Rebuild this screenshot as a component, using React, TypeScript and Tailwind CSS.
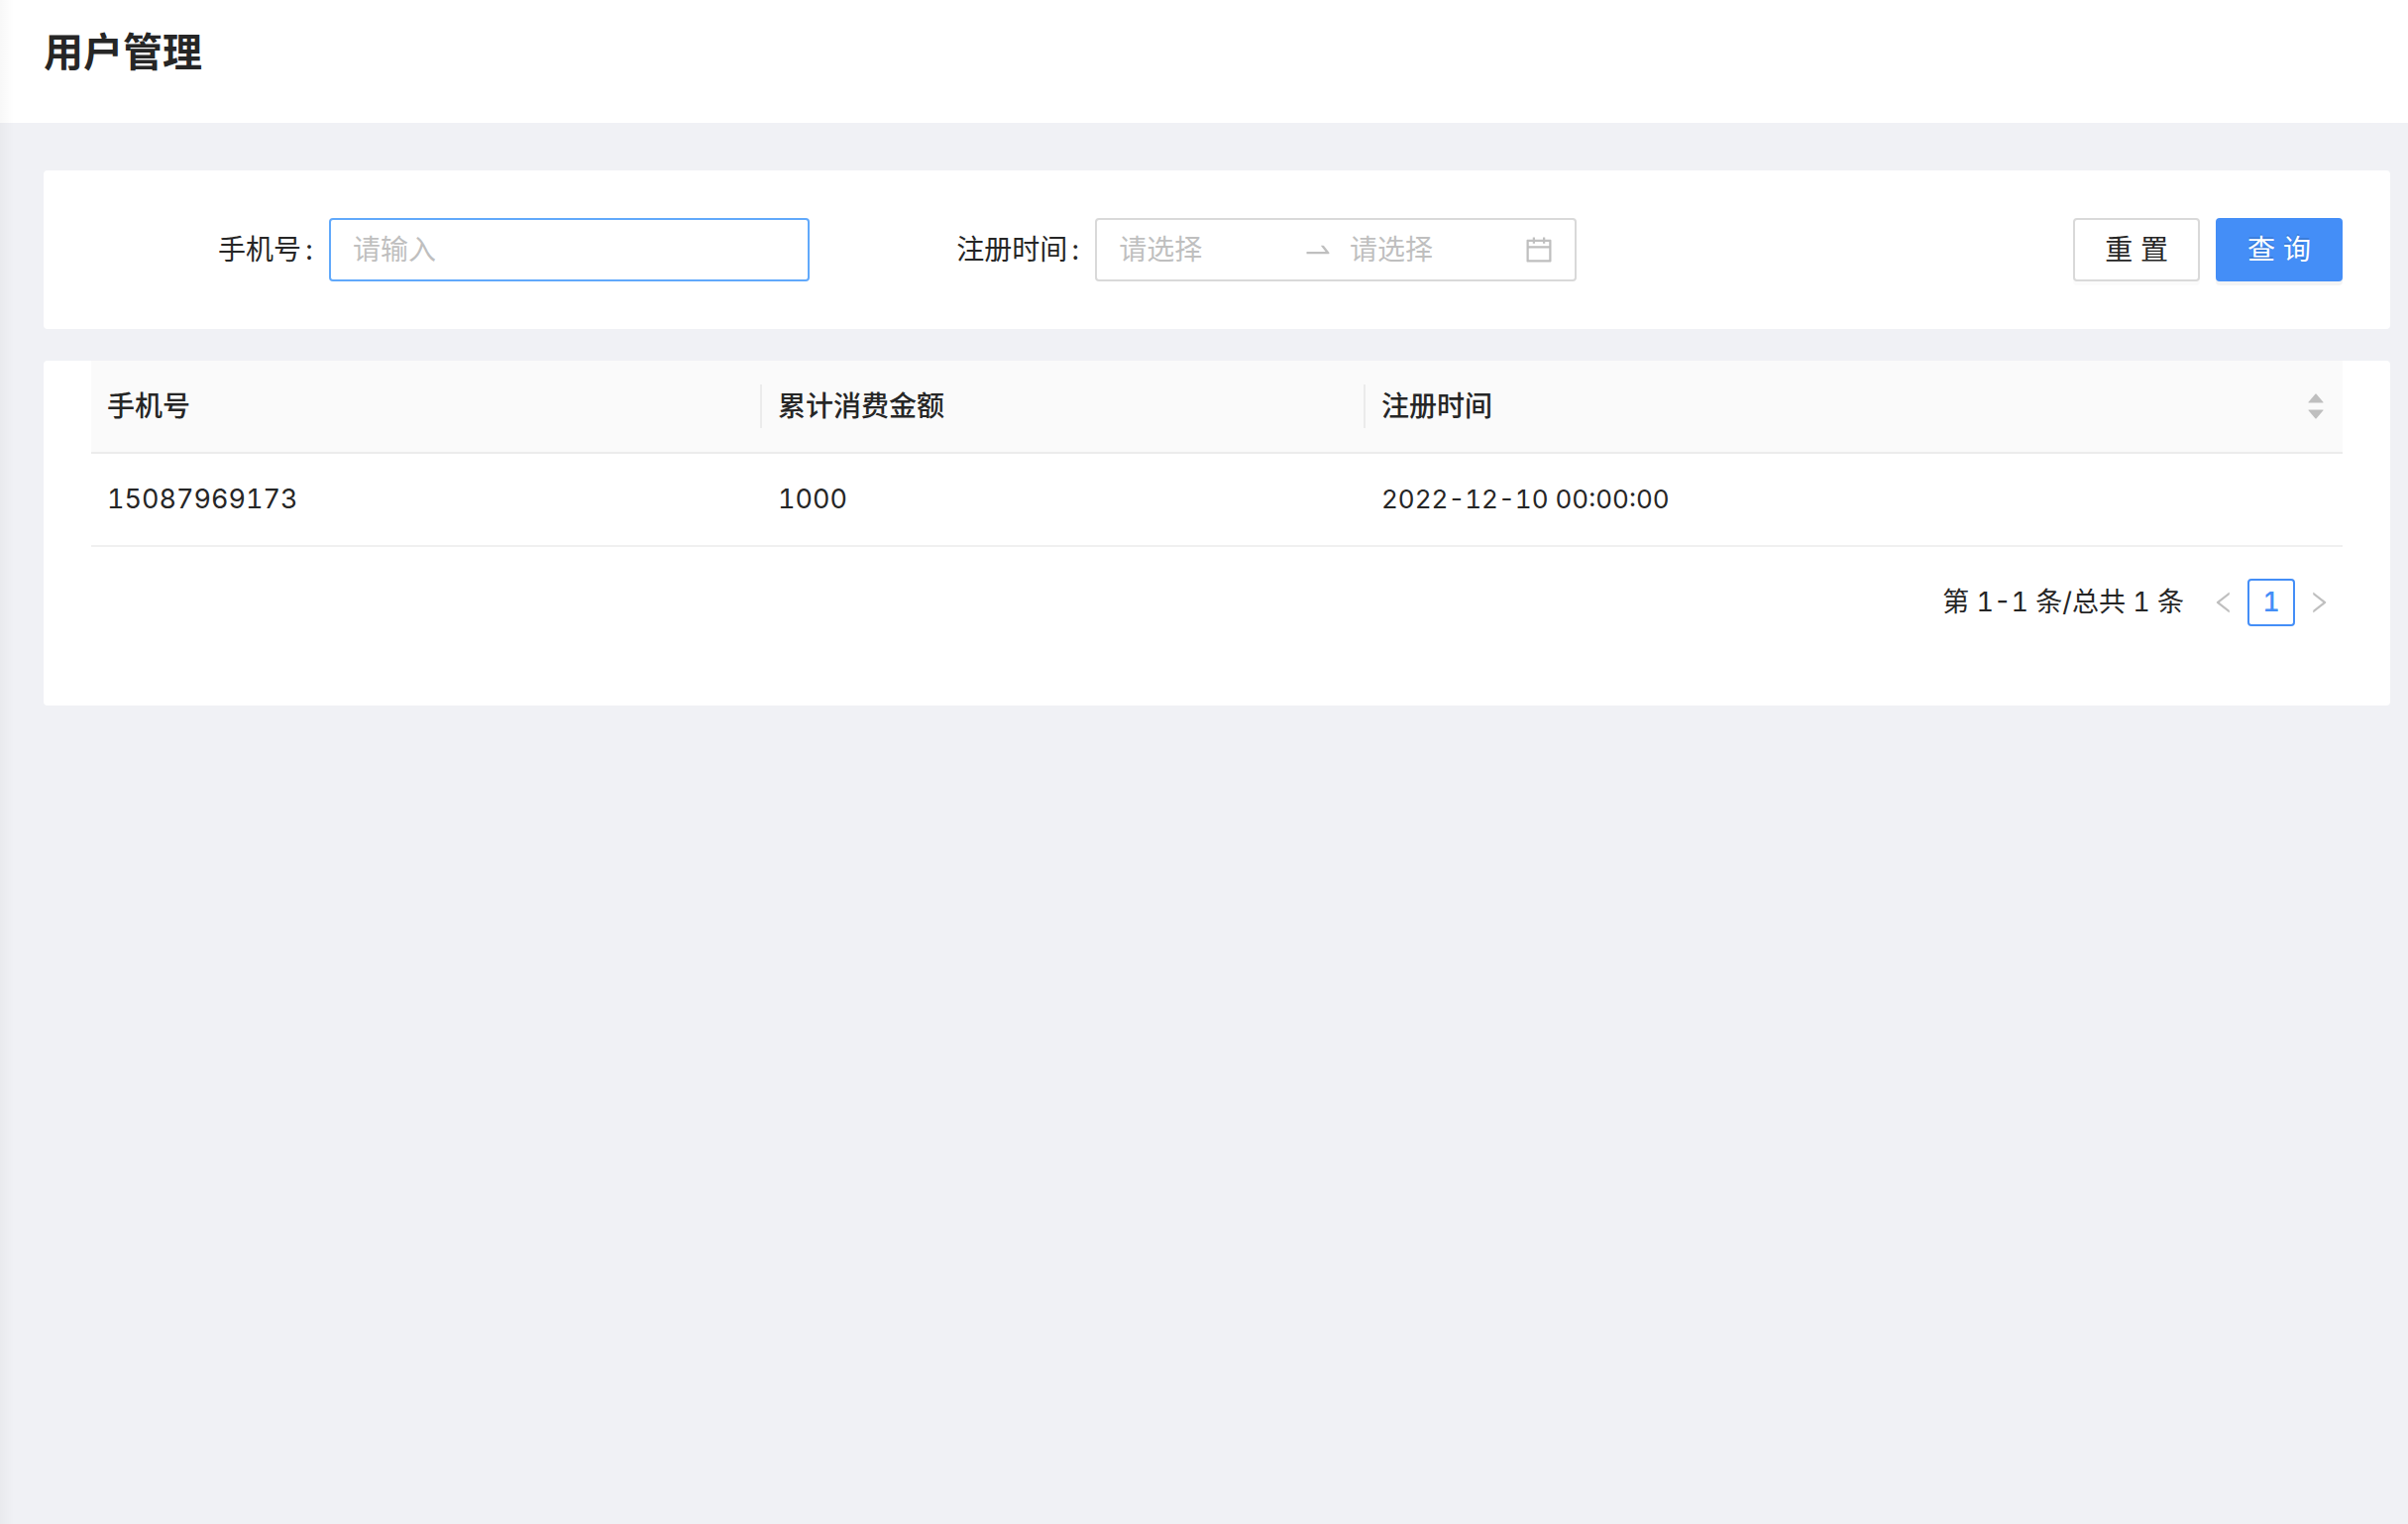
import React, { useState } from 'react';
import {
    AiFillCaretDown,
    AiFillCaretUp,
    AiOutlineCalendar,
    AiOutlineLeft,
    AiOutlineRight,
    AiOutlineSwapRight,
} from 'react-icons/ai';

interface User {
    phone: string;
    amount: number;
    registeredAt: string;
}

const USERS: User[] = [{ phone: '15087969173', amount: 1000, registeredAt: '2022-12-10 00:00:00' }];

interface FieldProps {
    label: string;
    htmlFor: string;
    children: React.ReactNode;
}

const Field: React.FC<FieldProps> = ({ label, htmlFor, children }) => (
    <div className="flex items-center">
        <label htmlFor={htmlFor} className="flex w-60 shrink-0 justify-end gap-1 pr-4 whitespace-nowrap">
            {label}
            <span>:</span>
        </label>
        <div className="min-w-0 flex-1">{children}</div>
    </div>
);

const SearchForm: React.FC = () => {
    const [phone, setPhone] = useState('');
    const [start, setStart] = useState('');
    const [end, setEnd] = useState('');

    const handleReset = () => {
        setPhone('');
        setStart('');
        setEnd('');
    };

    return (
        <form
            className="grid grid-cols-3 gap-12 rounded-sm bg-white p-12"
            onSubmit={(e) => e.preventDefault()}
            onReset={handleReset}
        >
            <Field label="手机号" htmlFor="phone">
                <input
                    id="phone"
                    type="text"
                    value={phone}
                    onChange={(e) => setPhone(e.target.value)}
                    placeholder="请输入"
                    className="h-16 w-full rounded-sm border-2 border-[#61a9fb] bg-white px-[22px] outline-none placeholder:text-[#bfbfbf]"
                />
            </Field>
            <Field label="注册时间" htmlFor="start">
                <div className="flex h-16 items-center rounded-sm border-2 border-[#d9d9d9] pr-5 pl-[22px] text-[#bfbfbf]">
                    <input
                        id="start"
                        type="text"
                        value={start}
                        onChange={(e) => setStart(e.target.value)}
                        placeholder="请选择"
                        className="w-0 flex-1 text-[#262626] outline-none placeholder:text-[#bfbfbf]"
                    />
                    <AiOutlineSwapRight size={32} className="mx-4 shrink-0" />
                    <input
                        type="text"
                        aria-label="结束时间"
                        value={end}
                        onChange={(e) => setEnd(e.target.value)}
                        placeholder="请选择"
                        className="w-0 flex-1 text-[#262626] outline-none placeholder:text-[#bfbfbf]"
                    />
                    <AiOutlineCalendar size={32} className="ml-1.5 shrink-0" />
                </div>
            </Field>
            <div className="flex justify-end gap-4">
                <button
                    type="reset"
                    className="h-16 rounded-sm border-2 border-[#d9d9d9] bg-white px-[30px] whitespace-nowrap shadow-[0_4px_0_rgba(0,0,0,0.016)]"
                >
                    重 置
                </button>
                <button
                    type="submit"
                    className="h-16 rounded-sm border-2 border-[#448ef7] bg-[#448ef7] px-[30px] whitespace-nowrap text-white shadow-[0_4px_0_rgba(0,0,0,0.045)] [text-shadow:0_-2px_0_rgba(0,0,0,0.12)]"
                >
                    查 询
                </button>
            </div>
        </form>
    );
};

const HeadDivider: React.FC = () => (
    <span className="absolute top-1/2 right-0 h-11 w-0.5 -translate-y-1/2 bg-black/6" />
);

const UserTable: React.FC<{ users: User[] }> = ({ users }) => (
    <table className="w-full table-fixed border-separate border-spacing-0 text-left tabular-nums">
        <thead>
            <tr className="bg-[#fafafa]">
                <th className="relative w-[29.8%] border-b-2 border-[#ececec] px-4 py-6 font-medium">
                    手机号
                    <HeadDivider />
                </th>
                <th className="relative w-[26.8%] border-b-2 border-[#ececec] px-4 py-6 font-medium">
                    累计消费金额
                    <HeadDivider />
                </th>
                <th className="border-b-2 border-[#ececec] px-4 py-6 font-medium">
                    <div className="flex h-11 items-center justify-between">
                        注册时间
                        <button type="button" aria-label="排序" className="flex flex-col text-[#bfbfbf]">
                            <AiFillCaretUp size={22} />
                            <AiFillCaretDown size={22} className="-mt-1.5" />
                        </button>
                    </div>
                </th>
            </tr>
        </thead>
        <tbody>
            {users.map((u) => (
                <tr key={u.phone}>
                    <td className="border-b-2 border-[#f0f0f0] px-4 py-6 text-[27px]">{u.phone}</td>
                    <td className="border-b-2 border-[#f0f0f0] px-4 py-6 text-[27px]">{u.amount}</td>
                    <td className="border-b-2 border-[#f0f0f0] px-4 py-6 text-[26px]">{u.registeredAt}</td>
                </tr>
            ))}
        </tbody>
    </table>
);

const Pagination: React.FC<{ total: number }> = ({ total }) => (
    <nav className="my-8 flex h-12 items-center justify-end text-[27px] tabular-nums">
        <span className="mr-4">
            第 1-{total} 条/总共 {total} 条
        </span>
        <button type="button" disabled aria-label="上一页" className="flex size-12 items-center justify-center text-[#bfbfbf]">
            <AiOutlineLeft size={28} />
        </button>
        <button
            type="button"
            className="flex size-12 items-center justify-center rounded-sm border-2 border-[#448ef7] font-medium text-[#448ef7]"
        >
            1
        </button>
        <button type="button" disabled aria-label="下一页" className="flex size-12 items-center justify-center text-[#bfbfbf]">
            <AiOutlineRight size={28} />
        </button>
    </nav>
);

export default function App() {
    return (
        <div className="relative min-h-screen bg-[#f0f1f5] font-['Inter','Noto_Sans_CJK_SC',sans-serif] text-[28px] leading-[44px] text-[#262626]">
            <header className="bg-white pt-[21px] pr-[18px] pb-[39px] pl-11">
                <h1 className="text-[40px] leading-[64px] font-semibold">用户管理</h1>
            </header>
            <main className="flex flex-col gap-8 pt-12 pr-[18px] pb-12 pl-11">
                <SearchForm />
                <section className="rounded-sm bg-white px-12 pb-12">
                    <UserTable users={USERS} />
                    <Pagination total={USERS.length} />
                </section>
            </main>
            {/* shadow cast by the side menu */}
            <div className="pointer-events-none absolute inset-y-0 left-0 w-3.5 bg-linear-to-r from-black/3 to-transparent" />
        </div>
    );
}
